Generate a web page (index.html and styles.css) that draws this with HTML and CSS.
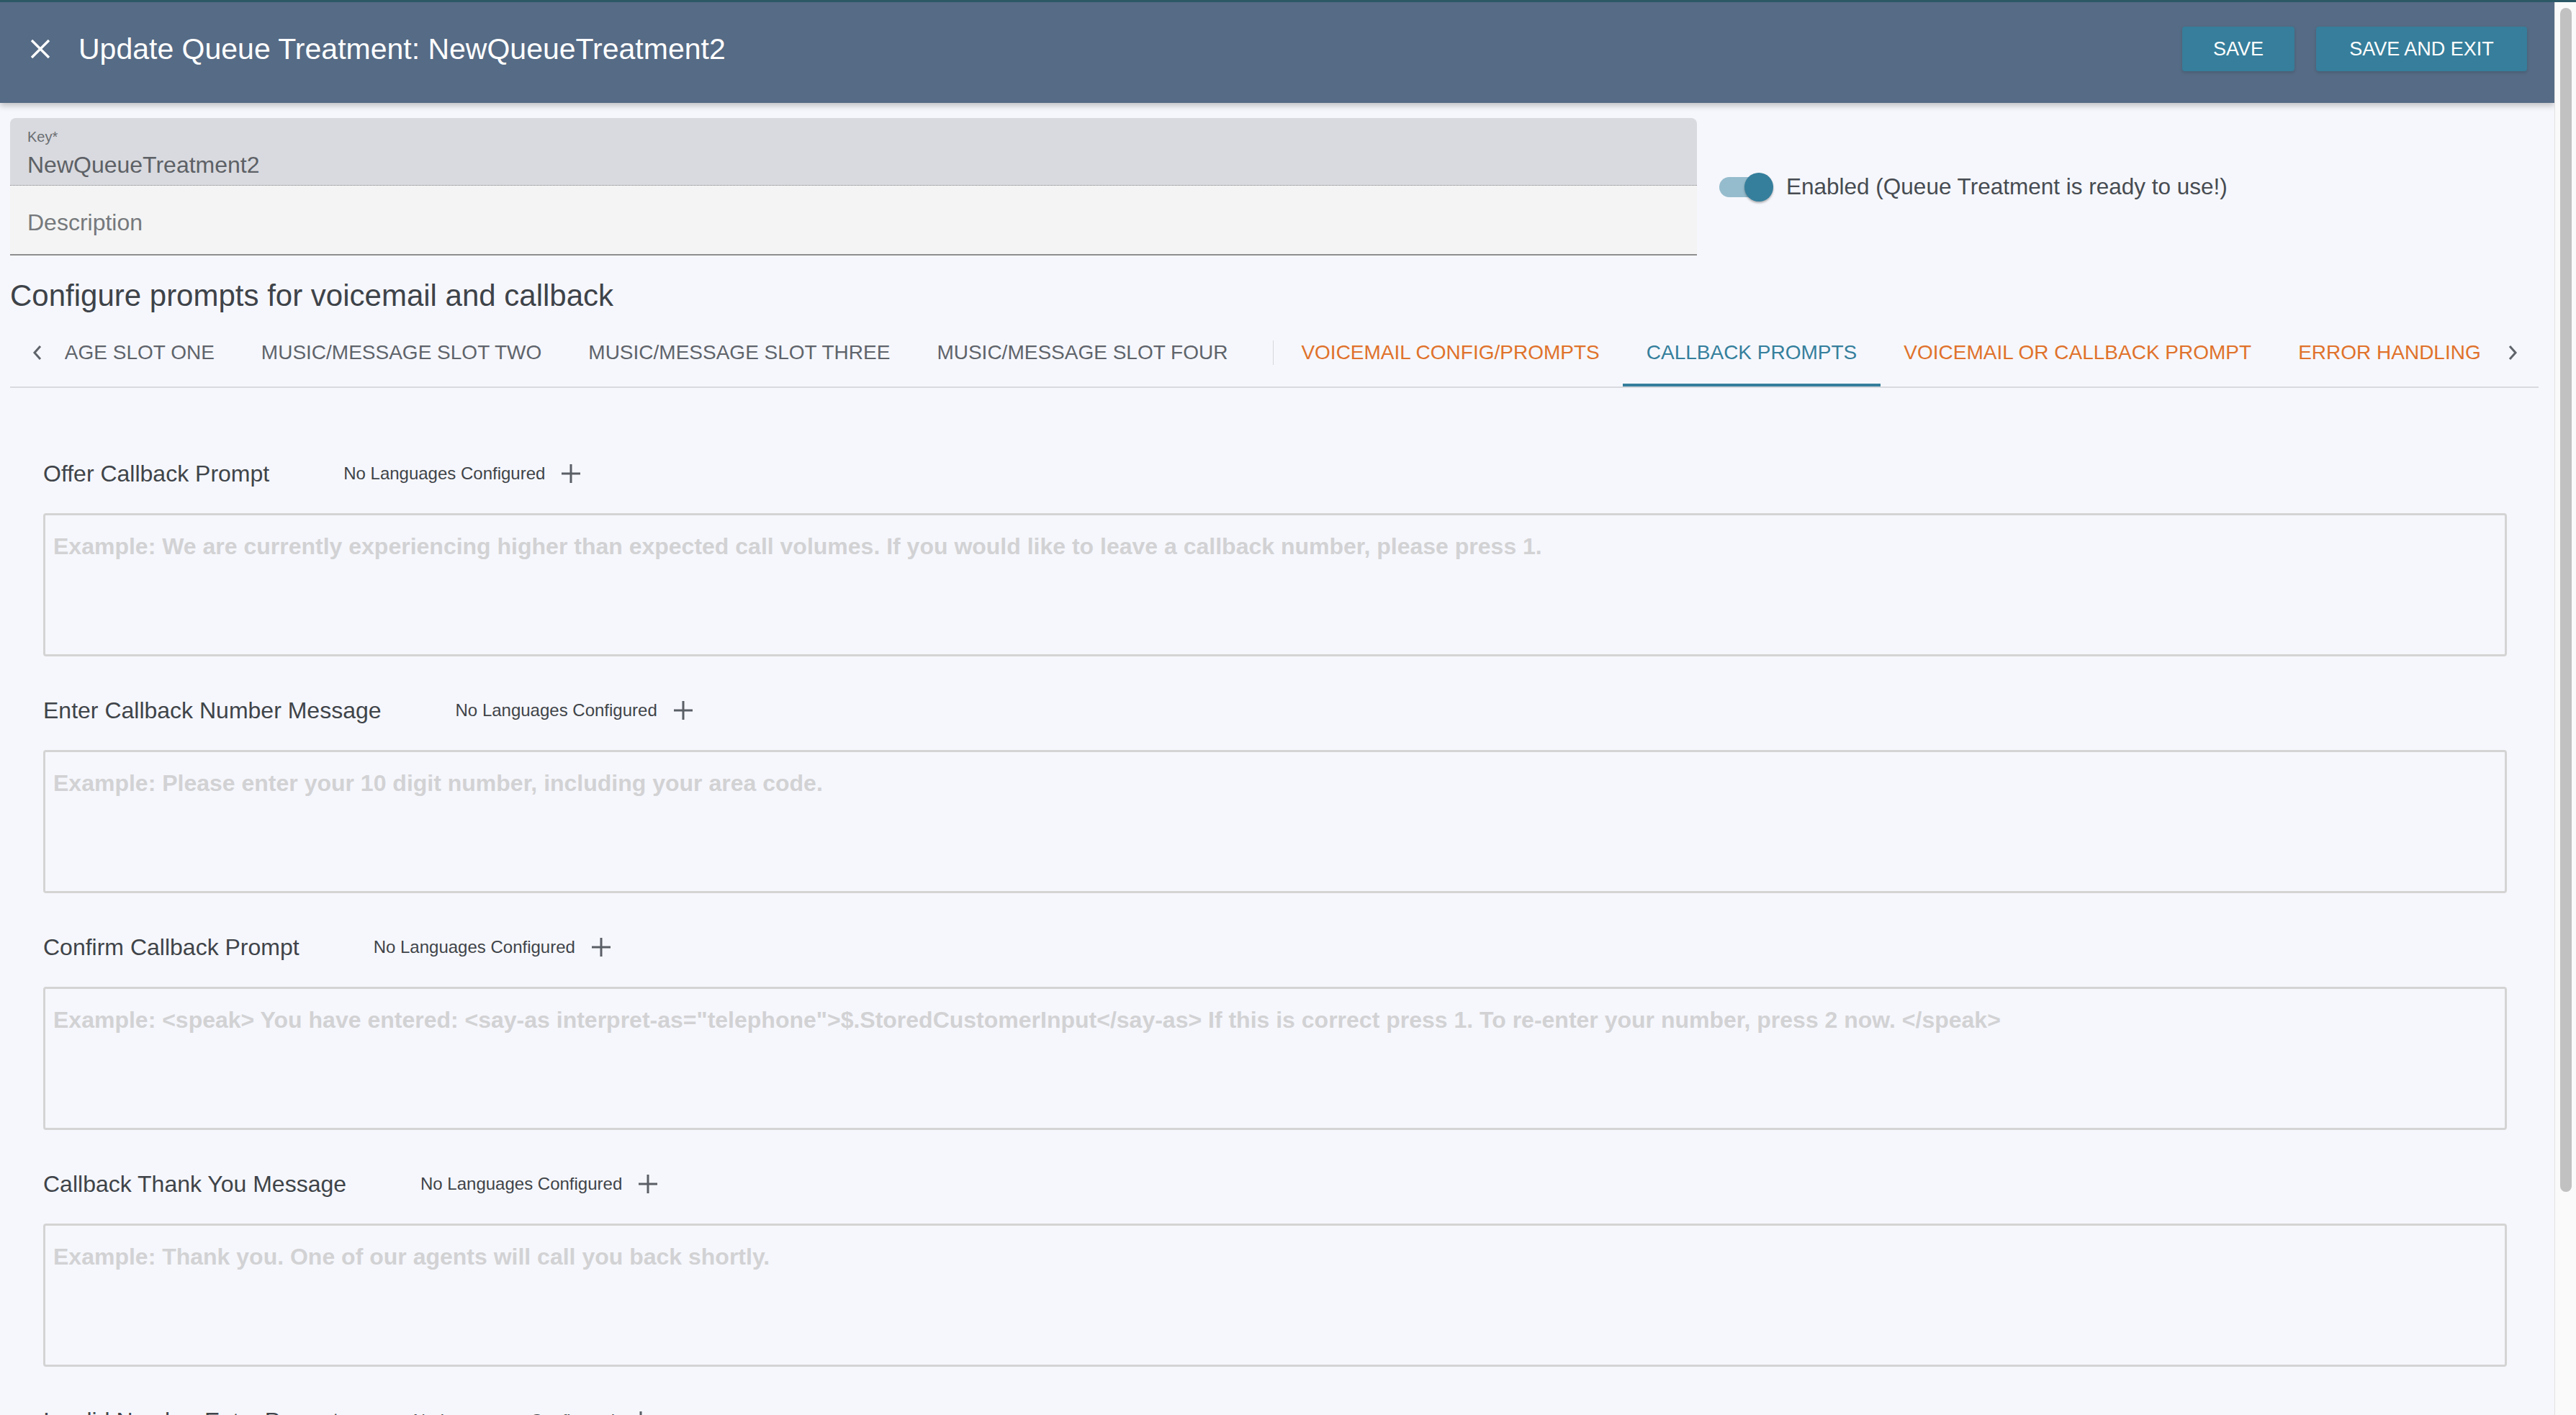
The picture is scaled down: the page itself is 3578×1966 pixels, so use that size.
FILE: index.html
```html
<!DOCTYPE html>
<html>
  <head>
    <title>Update Queue Treatment</title>
    <link rel="stylesheet" href="styles.css">
  </head>
  <body>
    <div id="app">
      <div class="page">
        <header class="topbar">
          <button class="close-btn" aria-label="Close">
            <svg width="28" height="26" viewBox="0 0 28 26">
              <path d="M2 1 L26 25 M26 1 L2 25" stroke="#fff" stroke-width="3.4" fill="none" />
            </svg>
          </button>
          <h1 class="title">Update Queue Treatment: NewQueueTreatment2</h1>
          <div class="actions">
            <button class="btn">SAVE</button>
            <button class="btn btn-exit">SAVE AND EXIT</button>
          </div>
        </header>

        <main class="content">
          <div class="details">
            <div class="fields">
              <div class="field field-key">
                <div class="field-label">Key*</div>
                <div class="field-value">NewQueueTreatment2</div>
              </div>
              <div class="field field-desc">Description</div>
            </div>
            <label class="toggle">
              <span class="switch"><span class="knob"></span></span>
              Enabled (Queue Treatment is ready to use!)
            </label>
          </div>

          <h2 class="section-title">Configure prompts for voicemail and callback</h2>

          <div class="tabbar">
            <button class="tab-scroll tab-scroll-left" aria-label="Previous">
              <svg width="14" height="22" viewBox="0 0 14 22">
                <polyline points="11,2 3,11 11,20" stroke="#5f646b" stroke-width="3" fill="none" />
              </svg>
            </button>
            <div class="tab-viewport">
              <div class="tab-list">
                <button class="tab">MUSIC/MESSAGE SLOT ONE</button>
                <button class="tab">MUSIC/MESSAGE SLOT TWO</button>
                <button class="tab">MUSIC/MESSAGE SLOT THREE</button>
                <button class="tab">MUSIC/MESSAGE SLOT FOUR</button>
                <span class="tab-sep"></span>
                <button class="tab tab-warn">VOICEMAIL CONFIG/PROMPTS</button>
                <button class="tab active">CALLBACK PROMPTS</button>
                <button class="tab tab-warn">VOICEMAIL OR CALLBACK PROMPT</button>
                <button class="tab tab-warn">ERROR HANDLING</button>
              </div>
            </div>
            <button class="tab-scroll tab-scroll-right" aria-label="Next">
              <svg width="14" height="22" viewBox="0 0 14 22">
                <polyline points="3,2 11,11 3,20" stroke="#5f646b" stroke-width="3" fill="none" />
              </svg>
            </button>
          </div>

          <div class="prompts">
            <div class="prompt">
              <div class="prompt-head">
                <span class="prompt-name">Offer Callback Prompt</span>
                <span class="prompt-lang">No Languages Configured</span>
                <button class="add-btn" aria-label="Add language">
                  <svg width="28" height="28" viewBox="0 0 28 28"><path d="M14 1 V27 M1 14 H27" stroke="#5a5f66" stroke-width="3" /></svg>
                </button>
              </div>
              <textarea class="prompt-text" placeholder="Example: We are currently experiencing higher than expected call volumes. If you would like to leave a callback number, please press 1."></textarea>
            </div>

            <div class="prompt">
              <div class="prompt-head">
                <span class="prompt-name">Enter Callback Number Message</span>
                <span class="prompt-lang">No Languages Configured</span>
                <button class="add-btn" aria-label="Add language">
                  <svg width="28" height="28" viewBox="0 0 28 28"><path d="M14 1 V27 M1 14 H27" stroke="#5a5f66" stroke-width="3" /></svg>
                </button>
              </div>
              <textarea class="prompt-text" placeholder="Example: Please enter your 10 digit number, including your area code."></textarea>
            </div>

            <div class="prompt">
              <div class="prompt-head">
                <span class="prompt-name">Confirm Callback Prompt</span>
                <span class="prompt-lang">No Languages Configured</span>
                <button class="add-btn" aria-label="Add language">
                  <svg width="28" height="28" viewBox="0 0 28 28"><path d="M14 1 V27 M1 14 H27" stroke="#5a5f66" stroke-width="3" /></svg>
                </button>
              </div>
              <textarea class="prompt-text" placeholder="Example: &lt;speak&gt; You have entered: &lt;say-as interpret-as=&quot;telephone&quot;&gt;$.StoredCustomerInput&lt;/say-as&gt; If this is correct press 1. To re-enter your number, press 2 now. &lt;/speak&gt;"></textarea>
            </div>

            <div class="prompt">
              <div class="prompt-head">
                <span class="prompt-name">Callback Thank You Message</span>
                <span class="prompt-lang">No Languages Configured</span>
                <button class="add-btn" aria-label="Add language">
                  <svg width="28" height="28" viewBox="0 0 28 28"><path d="M14 1 V27 M1 14 H27" stroke="#5a5f66" stroke-width="3" /></svg>
                </button>
              </div>
              <textarea class="prompt-text" placeholder="Example: Thank you. One of our agents will call you back shortly."></textarea>
            </div>

            <div class="prompt">
              <div class="prompt-head">
                <span class="prompt-name">Invalid Number Entry Prompt</span>
                <span class="prompt-lang">No Languages Configured</span>
                <button class="add-btn" aria-label="Add language">
                  <svg width="28" height="28" viewBox="0 0 28 28"><path d="M14 1 V27 M1 14 H27" stroke="#5a5f66" stroke-width="3" /></svg>
                </button>
              </div>
              <textarea class="prompt-text" placeholder="Example: Sorry, that number is not valid."></textarea>
            </div>
          </div>
        </main>
      </div>

      <div class="scrollbar">
        <div class="scrollbar-thumb"></div>
      </div>
    </div>
  </body>
</html>
```

FILE: styles.css
```css
html,
body {
  margin: 0;
  height: 100%;
}

body {
  font-family: "Liberation Sans", Arial, sans-serif;
  background-color: #f6f7fc;
  color: #3f4449;
}

button {
  font-family: inherit;
  background: none;
  border: none;
  padding: 0;
  cursor: pointer;
}

#app {
  display: flex;
  height: 100vh;
  overflow: hidden;
  border-top: 3px solid #2c5866;
  box-sizing: border-box;
}

.page {
  flex: 1;
  min-width: 0;
  overflow: hidden;
}

/* top bar */
.topbar {
  display: flex;
  align-items: center;
  height: 140px;
  box-sizing: border-box;
  padding: 0 38px 10px 42px;
  background-color: #566b85;
  box-shadow: 0 4px 8px rgba(0, 0, 0, 0.22);
  position: relative;
  z-index: 1;
}

.close-btn {
  display: flex;
  width: 28px;
  height: 26px;
}

.title {
  margin: 0 0 0 39px;
  font-size: 41px;
  font-weight: normal;
  line-height: 1;
  color: #fff;
}

.actions {
  margin-left: auto;
  display: flex;
  gap: 30px;
}

.btn {
  height: 62px;
  padding: 0 43px;
  background-color: #367e9b;
  color: #fff;
  font-size: 27px;
  border-radius: 4px;
  box-shadow: 0 2px 4px rgba(0, 0, 0, 0.15);
}

.btn-exit {
  min-width: 293px;
}

/* page body */
.content {
  padding: 21px 22px 0 14px;
}

.details {
  display: flex;
  align-items: center;
}

.fields {
  flex: 0 0 2343px;
}

.field {
  padding-left: 24px;
}

.field-key {
  background-color: #d9dadf;
  border-radius: 8px 8px 0 0;
  border-bottom: 1px dotted #8a8a8a;
  padding-top: 16px;
  padding-bottom: 12px;
}

.field-label {
  font-size: 20px;
  line-height: 1;
  color: #6a6d71;
}

.field-value {
  margin-top: 13px;
  font-size: 32px;
  line-height: 1;
  color: #5d6166;
}

.field-desc {
  background-color: #f4f4f4;
  border-bottom: 2px solid #8e8e8e;
  padding-top: 35px;
  padding-bottom: 28px;
  font-size: 32px;
  line-height: 1;
  color: #76797c;
}

.toggle {
  display: flex;
  align-items: center;
  margin-left: 31px;
  font-size: 31.5px;
  color: #474c52;
}

.switch {
  position: relative;
  width: 62px;
  height: 28px;
  margin-right: 31px;
  border-radius: 14px;
  background-color: #95bccd;
}

.knob {
  position: absolute;
  top: -6px;
  right: -13px;
  width: 40px;
  height: 40px;
  border-radius: 50%;
  background-color: #357f9c;
  box-shadow: 0 2px 3px rgba(0, 0, 0, 0.3);
}

.section-title {
  margin: 35px 0 11px;
  font-size: 42px;
  font-weight: normal;
  line-height: 1;
  color: #3e4349;
}

/* tabs */
.tabbar {
  display: flex;
  height: 94px;
  border-bottom: 2px solid #d9dadf;
}

.tab-scroll {
  display: flex;
  align-items: center;
  justify-content: center;
  flex: 0 0 76px;
}

.tab-scroll-right {
  flex-basis: 72px;
}

.tab-viewport {
  flex: 1;
  overflow: hidden;
}

.tab-list {
  display: flex;
  align-items: center;
  height: 100%;
  margin-left: -210px;
}

.tab {
  height: 100%;
  box-sizing: border-box;
  padding: 4px 32.5px 0;
  border-bottom: 4px solid transparent;
  font-size: 28px;
  color: #5f646b;
  white-space: nowrap;
  flex-shrink: 0;
}

.tab-warn {
  color: #e0722b;
}

.tab.active {
  color: #357f9c;
  border-bottom-color: #357f9c;
}

.tab-sep {
  flex: 0 0 1px;
  height: 34px;
  margin: 0 6px 0 30px;
  background-color: #d6d7db;
}

/* prompt editors */
.prompts {
  padding: 99px 44px 0 46px;
}

.prompt {
  margin-bottom: 55px;
}

.prompt-head {
  display: flex;
  align-items: center;
  height: 40px;
  margin-bottom: 35px;
}

.prompt-name {
  font-size: 32px;
  color: #3f4449;
}

.prompt-lang {
  margin-left: 103px;
  font-size: 24px;
  color: #3f4449;
}

.add-btn {
  display: flex;
  margin-left: 22px;
}

.prompt-text {
  display: block;
  width: 100%;
  height: 199px;
  box-sizing: border-box;
  padding: 27px 11px;
  border: 3px solid #d4d4d4;
  border-radius: 4px;
  background-color: transparent;
  font-family: inherit;
  font-size: 32px;
  font-weight: bold;
  line-height: 1;
  resize: none;
}

.prompt-text::placeholder {
  color: #d2d2d4;
}

/* scrollbar strip on the right */
.scrollbar {
  flex: 0 0 30px;
  box-sizing: border-box;
  padding: 8px 6px 0 7px;
  border-left: 1px solid #e2e2e2;
  background-color: #fafafa;
}

.scrollbar-thumb {
  height: 1645px;
  border-radius: 8px;
  background-color: #c1c1c1;
}
```
